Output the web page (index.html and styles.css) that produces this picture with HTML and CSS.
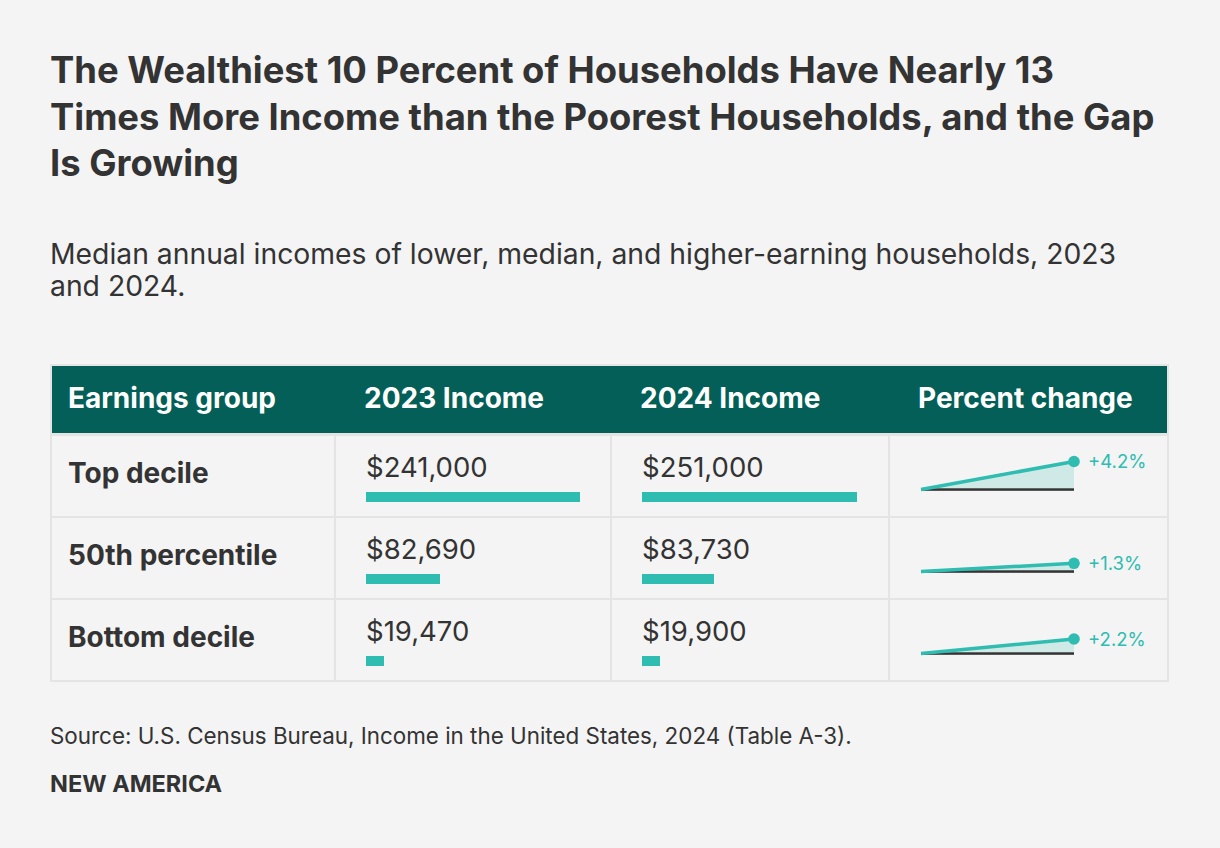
FILE: index.html
```html
<!DOCTYPE html>
<html lang="en">
<head>
<meta charset="utf-8">
<title>Household income deciles</title>
<link rel="stylesheet" href="styles.css">
</head>
<body>
<main class="chart">
  <h1 class="title">The Wealthiest 10 Percent of Households Have Nearly 13<br>Times More Income than the Poorest Households, and the Gap<br>Is Growing</h1>
  <p class="subtitle">Median annual incomes of lower, median, and higher-earning households, 2023 and 2024.</p>

  <div class="table">
    <div class="thead">
      <div class="th th-first">Earnings group</div>
      <div class="th">2023 Income</div>
      <div class="th">2024 Income</div>
      <div class="th">Percent change</div>
    </div>

    <div class="row">
      <div class="cell cell-label">Top decile</div>
      <div class="cell cell-value">
        <span class="value">$241,000</span>
        <span class="bar" style="width:214px"></span>
      </div>
      <div class="cell cell-value">
        <span class="value">$251,000</span>
        <span class="bar" style="width:215px"></span>
      </div>
      <div class="cell cell-spark">
        <svg class="spark" width="240" height="80" viewBox="0 0 240 80">
          <polygon class="area" points="0,53.5 153,25.5 153,53.5"/>
          <rect class="axis" x="0" y="52.3" width="153" height="2.5"/>
          <line class="trend" x1="0" y1="53.5" x2="153" y2="25.5"/>
          <circle class="dot" cx="153" cy="25.5" r="5.8"/>
          <text class="pct" x="167" y="32.2">+4.2%</text>
        </svg>
      </div>
    </div>

    <div class="row">
      <div class="cell cell-label">50th percentile</div>
      <div class="cell cell-value">
        <span class="value">$82,690</span>
        <span class="bar" style="width:74px"></span>
      </div>
      <div class="cell cell-value">
        <span class="value">$83,730</span>
        <span class="bar" style="width:72px"></span>
      </div>
      <div class="cell cell-spark">
        <svg class="spark" width="240" height="80" viewBox="0 0 240 80">
          <polygon class="area" points="0,53.5 153,45.3 153,53.5"/>
          <rect class="axis" x="0" y="52.3" width="153" height="2.5"/>
          <line class="trend" x1="0" y1="53.5" x2="153" y2="45.3"/>
          <circle class="dot" cx="153" cy="45.3" r="5.8"/>
          <text class="pct" x="167" y="52">+1.3%</text>
        </svg>
      </div>
    </div>

    <div class="row">
      <div class="cell cell-label">Bottom decile</div>
      <div class="cell cell-value">
        <span class="value">$19,470</span>
        <span class="bar" style="width:18px"></span>
      </div>
      <div class="cell cell-value">
        <span class="value">$19,900</span>
        <span class="bar" style="width:18px"></span>
      </div>
      <div class="cell cell-spark">
        <svg class="spark" width="240" height="80" viewBox="0 0 240 80">
          <polygon class="area" points="0,53.5 153,39 153,53.5"/>
          <rect class="axis" x="0" y="52.3" width="153" height="2.5"/>
          <line class="trend" x1="0" y1="53.5" x2="153" y2="39"/>
          <circle class="dot" cx="153" cy="39" r="5.8"/>
          <text class="pct" x="167" y="45.7">+2.2%</text>
        </svg>
      </div>
    </div>
  </div>

  <p class="source">Source: U.S. Census Bureau, Income in the United States, 2024 (Table A-3).</p>
  <p class="brand">NEW AMERICA</p>
</main>
</body>
</html>
```

FILE: styles.css
```css
* {
  box-sizing: border-box;
}

html,
body {
  margin: 0;
  padding: 0;
  background: #f4f4f4;
}

body {
  font-family: "Inter", "Noto Sans", sans-serif;
  color: #333333;
}

.chart {
  width: 1220px;
  min-height: 848px;
  padding: 47px 50px 0 50px;
}

.title {
  margin: 0;
  font-size: 36.4px;
  line-height: 46.5px;
  font-weight: 700;
  white-space: nowrap;
  color: #333333;
}

.subtitle {
  margin: 51px 0 0 0;
  width: 1090px;
  font-size: 28.3px;
  line-height: 32px;
  font-weight: 400;
}

.table {
  margin-top: 62px;
  width: 1119px;
  border: 2px solid #e4e4e4;
}

.thead,
.row {
  display: grid;
  grid-template-columns: 282px 276px 278px 279px;
}

.thead {
  height: 67px;
  background: #035f57;
  color: #ffffff;
  border-bottom: 3px solid #e4e4e4;
  box-sizing: content-box;
}

.th {
  padding: 16px 0 0 30px;
  font-size: 28px;
  line-height: 32px;
  font-weight: 700;
  white-space: nowrap;
}

.th-first {
  padding-left: 16px;
}

.row {
  height: 82px;
  border-bottom: 2px solid #e4e4e4;
}

.row:last-child {
  border-bottom: none;
  height: 80px;
}

.cell {
  border-left: 2px solid #e4e4e4;
  padding-left: 30px;
}

.cell-label {
  border-left: none;
  padding: 21px 0 0 16px;
  font-size: 28px;
  line-height: 32px;
  font-weight: 700;
  white-space: nowrap;
}

.cell-value {
  display: flex;
  flex-direction: column;
  align-items: flex-start;
  padding-top: 16px;
}

.value {
  font-size: 27.5px;
  line-height: 30px;
  font-weight: 400;
}

.bar {
  display: block;
  height: 10px;
  margin-top: 10px;
  background: #2fbcb1;
}

.cell-spark {
  padding-left: 31px;
}

.spark {
  display: block;
  overflow: visible;
}

.spark .area {
  fill: #cfe9e6;
}

.spark .axis {
  fill: #333333;
}

.spark .trend {
  stroke: #2fbcb1;
  stroke-width: 3.5;
}

.spark .dot {
  fill: #2fbcb1;
}

.spark .pct {
  font-family: "Inter", "Noto Sans", sans-serif;
  font-size: 18.5px;
  fill: #2fbcb1;
}

.source {
  margin: 41px 0 0 0;
  font-size: 22.4px;
  line-height: 26px;
}

.brand {
  margin: 22px 0 0 0;
  font-size: 23.5px;
  line-height: 26px;
  font-weight: 700;
}
```
